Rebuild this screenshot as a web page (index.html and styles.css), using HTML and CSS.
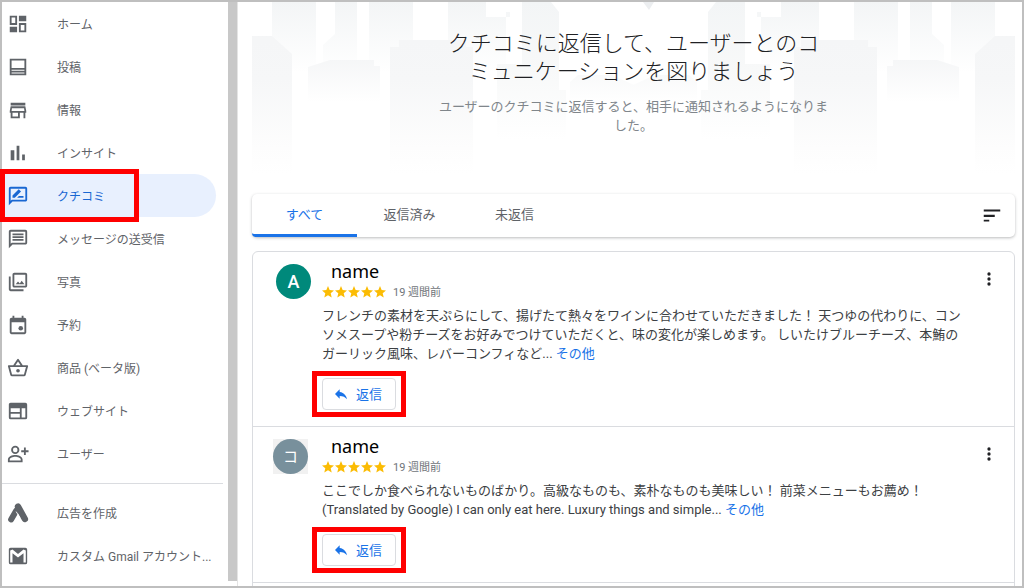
FILE: index.html
```html
<!DOCTYPE html>
<html lang="ja">
<head>
<meta charset="utf-8">
<title>クチコミ</title>
<meta name="viewport" content="width=device-width, initial-scale=1">
<link rel="stylesheet" href="styles.css">
</head>
<body>
<svg class="defs" aria-hidden="true">
  <symbol id="star" viewBox="0 0 24 24"><path d="M12 18.3 19.4 23l-2-8.5L24 8.8l-8.700-.7L12 0 8.700 8.100 0 8.800l6.600 5.700L4.600 23z"/></symbol>
  <symbol id="more" viewBox="0 0 24 24"><circle cx="12" cy="4.500" r="2.500"/><circle cx="12" cy="12" r="2.500"/><circle cx="12" cy="19.500" r="2.500"/></symbol>
  <symbol id="reply" viewBox="0 0 24 24"><path d="M10 9V5l-7 7 7 7v-4.100c5 0 8.500 1.600 11 5.100-1-5-4-10-11-11z"/></symbol>
</svg>
<div class="frame">
  <aside class="sidebar">
    <nav class="nav">
      <a class="item" href="#"><svg class="icon" viewBox="0 0 24 24"><path d="M19 5v2h-4V5h4M9 5v6H5V5h4m10 8v6h-4v-6h4M9 17v2H5v-2h4M21 3h-8v6h8V3zM11 3H3v10h8V3zm10 8h-8v10h8V11zm-10 4H3v6h8v-6z"/><path d="M14 4h6v4h-6zM4 16h6v4H4z"/></svg><span class="label">ホーム</span></a>
      <a class="item" href="#"><svg class="icon" viewBox="0 0 24 24"><path d="M3 3h18v18H3zM5 5v8h14V5zM5 15v1h14v-1zM5 18v1h14v-1z" fill-rule="evenodd"/></svg><span class="label">投稿</span></a>
      <a class="item" href="#"><svg class="icon" viewBox="0 0 24 24"><path d="M4 4h16v3H4zM4 8h16l1 5v2h-1v6h-2v-6h-4v6H4v-6H3v-2zm2 7v4h6v-4zM5.400 10 5 13h14l-.4-3z" fill-rule="evenodd"/></svg><span class="label">情報</span></a>
      <a class="item" href="#"><svg class="icon" viewBox="0 0 24 24"><path d="M4 9h4v11H4zM10.500 4h3v16h-3zM16.500 13.500h3V20h-3z"/></svg><span class="label">インサイト</span></a>
      <a class="item active" href="#" aria-current="page"><svg class="icon" viewBox="0 0 24 24"><path d="M20 2H4c-1.100 0-2 .9-2 2v18l4-4h14c1.100 0 2-.9 2-2V4c0-1.100-.9-2-2-2zm0 14H5.200L4 17.200V4h16zM6 14v-2.500l6.800-6.800 2.500 2.500L8.500 14zM11 14l2-2h5v2z" fill-rule="evenodd"/></svg><span class="label">クチコミ</span></a>
      <a class="item" href="#"><svg class="icon" viewBox="0 0 24 24"><path d="M20 2H4c-1.100 0-2 .9-2 2v18l4-4h14c1.100 0 2-.9 2-2V4c0-1.100-.9-2-2-2zm0 14H5.200L4 17.200V4h16zM6 12h12v2H6zM6 9h12v2H6zM6 6h12v2H6z" fill-rule="evenodd"/></svg><span class="label">メッセージの送受信</span></a>
      <a class="item" href="#"><svg class="icon" viewBox="0 0 24 24"><path d="M20 2H8c-1.100 0-2 .9-2 2v12c0 1.100.9 2 2 2h12c1.100 0 2-.9 2-2V4c0-1.100-.9-2-2-2zm0 14H8V4h12zM9.500 14.500l2.500-3 2 2 2-3 3 4zM4 6H2v14c0 1.100.9 2 2 2h14v-2H4z" fill-rule="evenodd"/></svg><span class="label">写真</span></a>
      <a class="item" href="#"><svg class="icon" viewBox="0 0 24 24"><path d="M19 4h-1V2h-2v2H8V2H6v2H5c-1.100 0-2 .9-2 2v14c0 1.100.9 2 2 2h14c1.100 0 2-.9 2-2V6c0-1.100-.9-2-2-2zm0 16H5V9h14z" fill-rule="evenodd"/><circle cx="15" cy="15.500" r="2.500"/></svg><span class="label">予約</span></a>
      <a class="item" href="#"><svg class="icon" viewBox="0 0 24 24"><path d="M22 9h-4.800l-4.400-6.600a1 1 0 0 0-1.600 0L6.800 9H2c-.6 0-1 .5-1 1l.1.300 2.500 9.200A2 2 0 0 0 5.500 21h13a2 2 0 0 0 1.900-1.500L23 10c0-.5-.4-1-1-1zM12 4.800 14.800 9H9.200zM18.500 19h-13l-2.200-8h17.400z" fill-rule="evenodd"/><circle cx="12" cy="15" r="2"/></svg><span class="label">商品 (ベータ版)</span></a>
      <a class="item" href="#"><svg class="icon" viewBox="0 0 24 24"><path d="M4 3h16a2 2 0 0 1 2 2v14a2 2 0 0 1-2 2H4a2 2 0 0 1-2-2V5c0-1.100.9-2 2-2zm0 6v4h10V9zM4 15v4h10v-4zM16 9v10h4V9z" fill-rule="evenodd"/></svg><span class="label">ウェブサイト</span></a>
      <a class="item" href="#"><svg class="icon" viewBox="0 0 24 24"><path d="M9 3a4.500 4.500 0 1 1 0 9 4.500 4.500 0 0 1 0-9zm0 2a2.500 2.500 0 1 0 0 5 2.500 2.500 0 0 0 0-5zM9 13c3 0 8 1.500 8 5v3H1v-3c0-3.500 5-5 8-5zm0 2c-2.500 0-6 1.200-6 3v1h12v-1c0-1.800-3.500-3-6-3z" fill-rule="evenodd"/><path d="M18.500 5h2v3h3v2h-3v3h-2v-3h-3V8h3z"/></svg><span class="label">ユーザー</span></a>
      <hr class="rule">
      <a class="item" href="#"><svg class="icon" viewBox="0 0 24 24"><g fill="none" stroke="currentColor" stroke-linecap="round"><path d="M12 5l7.500 13.500" stroke-width="7"/><path d="M10 9.500 4.500 19" stroke-width="6.500"/></g><path d="M10 10.500l4 6.500" fill="none" stroke="#fff"/></svg><span class="label">広告を作成</span></a>
      <a class="item" href="#"><svg class="icon" viewBox="0 0 24 24"><path d="M4 3h16a2 2 0 0 1 2 2v14a2 2 0 0 1-2 2H4a2 2 0 0 1-2-2V5c0-1.100.9-2 2-2zM3.500 6v13H6V9l6 4.500L18 9v10h2.500V6L18 4.800l-6 5-6-5z" fill-rule="evenodd"/><path d="M7 10.500l5 4 5-4V20H7z"/></svg><span class="label">カスタム Gmail アカウント...</span></a>
    </nav>
    <div class="scrollbar"></div>
  </aside>
  <main class="main">
    <header class="hero">
      <svg class="city" viewBox="0 0 763 180" preserveAspectRatio="none" aria-hidden="true">
        <defs>
          <linearGradient id="fade" gradientUnits="userSpaceOnUse" x1="0" y1="0" x2="0" y2="172">
            <stop offset="0" stop-color="#f4f5f6"/><stop offset=".45" stop-color="#f6f7f8"/><stop offset=".85" stop-color="#fdfdfd"/><stop offset="1" stop-color="#fff"/>
          </linearGradient>
          <linearGradient id="far" gradientUnits="userSpaceOnUse" x1="0" y1="0" x2="0" y2="70">
            <stop offset="0" stop-color="#f3f5f6"/><stop offset="1" stop-color="#fff"/>
          </linearGradient>
          <linearGradient id="tower" gradientUnits="userSpaceOnUse" x1="0" y1="0" x2="0" y2="138">
            <stop offset="0" stop-color="#f3f5f6"/><stop offset=".5" stop-color="#f8f9f9"/><stop offset="1" stop-color="#fff"/>
          </linearGradient>
          <linearGradient id="near" gradientUnits="userSpaceOnUse" x1="0" y1="56" x2="0" y2="100">
            <stop offset="0" stop-color="#f5f6f7"/><stop offset="1" stop-color="#fff"/>
          </linearGradient>
          <g id="blocks">
            <path fill="url(#far)" d="M20 0h44v80H20zM83 0h22v80H71V43l12-11zM117 0h44v80h-44zM196 0h38v15h24V10h-4v70h-58z"/>
            <path fill="url(#fade)" d="M0 34h20l20 18v120H0z"/>
            <path fill="url(#tower)" d="M270 0h29l8 10v78h7v50h-69V62h25z"/>
            <path fill="url(#near)" d="M56 65l22-7h44v6h6v60H56zM318 80l8-7h34l22 10v60h-64z"/>
            <path fill="url(#fade)" d="M138 45h9v-7h67v7h7v127h-83z"/>
          </g>
        </defs>
        <use href="#blocks"/>
        <use href="#blocks" transform="matrix(-1 0 0 1 763 0)"/>
        <path fill="#eceef0" d="M391 0h11l-5 8z"/>
      </svg>
      <h1 class="title">クチコミに返信して、ユーザーとのコ<br>ミュニケーションを図りましょう</h1>
      <p class="lead">ユーザーのクチコミに返信すると、相手に通知されるようになりま<br>した。</p>
    </header>
    <div class="tabs">
      <button class="tab selected" type="button">すべて</button>
      <button class="tab" type="button">返信済み</button>
      <button class="tab" type="button">未返信</button>
      <button class="sort" type="button" aria-label="並べ替え"><svg class="icon" viewBox="0 0 24 24"><path d="M3 5h18v2H3zM3 10.500h12v2.500H3zM3 16h6v2H3z"/></svg></button>
    </div>
    <section class="reviews">
      <article class="review">
        <div class="avatar green">A</div>
        <div class="content">
          <h2 class="name">name</h2>
          <div class="meta">
            <span class="stars" role="img" aria-label="5 つ星"><svg><use href="#star"/></svg><svg><use href="#star"/></svg><svg><use href="#star"/></svg><svg><use href="#star"/></svg><svg><use href="#star"/></svg></span>
            <span>19 週間前</span>
          </div>
          <p class="text">フレンチの素材を天ぷらにして、揚げたて熱々をワインに合わせていただきました！ 天つゆの代わりに、コン<br>ソメスープや粉チーズをお好みでつけていただくと、味の変化が楽しめます。 しいたけブルーチーズ、本鮪の<br>ガーリック風味、レバーコンフィなど... <a class="link" href="#">その他</a></p>
          <button class="reply" type="button"><svg><use href="#reply"/></svg>返信</button>
        </div>
        <button class="more" type="button" aria-label="その他の操作"><svg><use href="#more"/></svg></button>
      </article>
      <article class="review">
        <div class="avatar-tile"><div class="avatar slate">コ</div></div>
        <div class="content">
          <h2 class="name">name</h2>
          <div class="meta">
            <span class="stars" role="img" aria-label="5 つ星"><svg><use href="#star"/></svg><svg><use href="#star"/></svg><svg><use href="#star"/></svg><svg><use href="#star"/></svg><svg><use href="#star"/></svg></span>
            <span>19 週間前</span>
          </div>
          <p class="text">ここでしか食べられないものばかり。高級なものも、素朴なものも美味しい！ 前菜メニューもお薦め！<br>(Translated by Google) I can only eat here. Luxury things and simple... <a class="link" href="#">その他</a></p>
          <button class="reply" type="button"><svg><use href="#reply"/></svg>返信</button>
        </div>
        <button class="more" type="button" aria-label="その他の操作"><svg><use href="#more"/></svg></button>
      </article>
      <div class="next"></div>
    </section>
  </main>
</div>
</body>
</html>
```
FILE: styles.css
```css
*,
*::after { box-sizing: border-box; }

body {
  margin: 0;
  overflow: hidden;
  background: #fff;
  color: #3c4043;
  font-family: Roboto, "Noto Sans CJK JP", sans-serif;
  font-size: 13px;
  line-height: 19px;
}

button {
  margin: 0;
  padding: 0;
  border: 0;
  background: none;
  font: inherit;
  color: inherit;
  cursor: pointer;
}

a { text-decoration: none; }
svg { fill: currentColor; }
h1, h2, p { margin: 0; font-weight: 400; }

.defs { display: none; }

.frame {
  display: flex;
  height: 100vh;
  border: 2px solid #bfbfbf;
}

.icon {
  flex: none;
  width: 22px;
  height: 22px;
}

/* Sidebar */
.sidebar {
  display: flex;
  flex: none;
  width: 236px;
  border-right: 1px solid #e4e4e4;
}

.nav {
  flex: 1;
  min-width: 0;
}

.item {
  position: relative;
  display: flex;
  align-items: center;
  gap: 28px;
  height: 43px;
  margin-right: 12px;
  padding-left: 5px;
  border-radius: 0 22px 22px 0;
  color: #5f6368;
  font-size: 12px;
  white-space: nowrap;
}

.label { padding-top: 3px; }

.item.active {
  background: #e8f0fe;
  color: #1967d2;
}

.item.active::after {
  content: "";
  position: absolute;
  top: -5px;
  left: -2px;
  width: 139px;
  height: 53px;
  border: 5px solid #f00;
}

.rule {
  height: 1px;
  margin: 8px 5px 7px 0;
  border: 0;
  background: #dadce0;
}

.scrollbar {
  width: 9px;
  margin-bottom: 5px;
  background: #c8c8c8;
}

/* Main column */
.main {
  flex: 1;
  min-width: 0;
  overflow: hidden;
  padding: 0 7px 0 14px;
}

.hero {
  position: relative;
  padding: 28px 0 59px;
  text-align: center;
}

.city {
  position: absolute;
  top: 0;
  left: 0;
  width: 100%;
  height: 180px;
}

.title {
  position: relative;
  color: #202124;
  font-size: 22px;
  font-weight: 300;
  line-height: 28px;
}

.lead {
  position: relative;
  margin-top: 11px;
  color: #80868b;
}

.tabs {
  display: flex;
  height: 43px;
  border-radius: 5px;
  background: #fff;
  box-shadow: 0 1px 3px rgba(60, 64, 67, 0.35);
}

.tab {
  width: 105px;
  border-bottom: 3px solid transparent;
  color: #5f6368;
}

.tab.selected {
  border-color: #1a73e8;
  border-radius: 0 2px 0 4px;
  color: #1a73e8;
}

.sort {
  display: flex;
  align-items: center;
  margin-left: auto;
  padding-right: 12px;
  color: #202124;
}

/* Reviews */
.reviews {
  margin-top: 14px;
  border: 1px solid #dadce0;
  border-radius: 6px;
}

.review {
  display: flex;
  align-items: flex-start;
  padding: 7px 14px 16px 20px;
  border-bottom: 1px solid #dadce0;
}

.avatar {
  flex: none;
  width: 35px;
  height: 35px;
  border-radius: 50%;
  color: #fff;
  font-size: 18px;
  line-height: 36px;
  text-align: center;
}

.green {
  margin: 5px 11px 0 3px;
  background: #00897b;
  font-weight: 500;
}

.avatar-tile {
  margin: 5px 14px 0 0;
  background: #f1f1f1;
}

.slate {
  background: #78909c;
  font-size: 15px;
}

.content {
  flex: 1;
  min-width: 0;
}

.name {
  padding-left: 9px;
  color: #000;
  font-family: "Noto Sans", "Open Sans", sans-serif;
  font-size: 18px;
  line-height: 24px;
}

.meta {
  display: flex;
  align-items: center;
  gap: 7px;
  height: 18px;
  color: #70757a;
  font-size: 11px;
}

.stars {
  display: flex;
  gap: 1px;
  color: #fbbc04;
}

.stars svg {
  width: 12px;
  height: 12px;
}

.text {
  margin-top: 5px;
  white-space: nowrap;
}

.link { color: #1a73e8; }

.reply {
  position: relative;
  display: flex;
  align-items: center;
  gap: 7px;
  height: 32px;
  margin-top: 15px;
  padding: 0 13px 0 10px;
  border: 1px solid #dadce0;
  border-radius: 4px;
  color: #1a73e8;
}

.reply svg {
  width: 16px;
  height: 16px;
}

.reply::after {
  content: "";
  position: absolute;
  inset: -8px -11px;
  border: 5px solid #f00;
}

.more {
  display: flex;
  margin-top: 12px;
  padding: 0 3px;
  color: #202124;
}

.more svg {
  width: 16px;
  height: 16px;
}

.next { height: 40px; }
```
